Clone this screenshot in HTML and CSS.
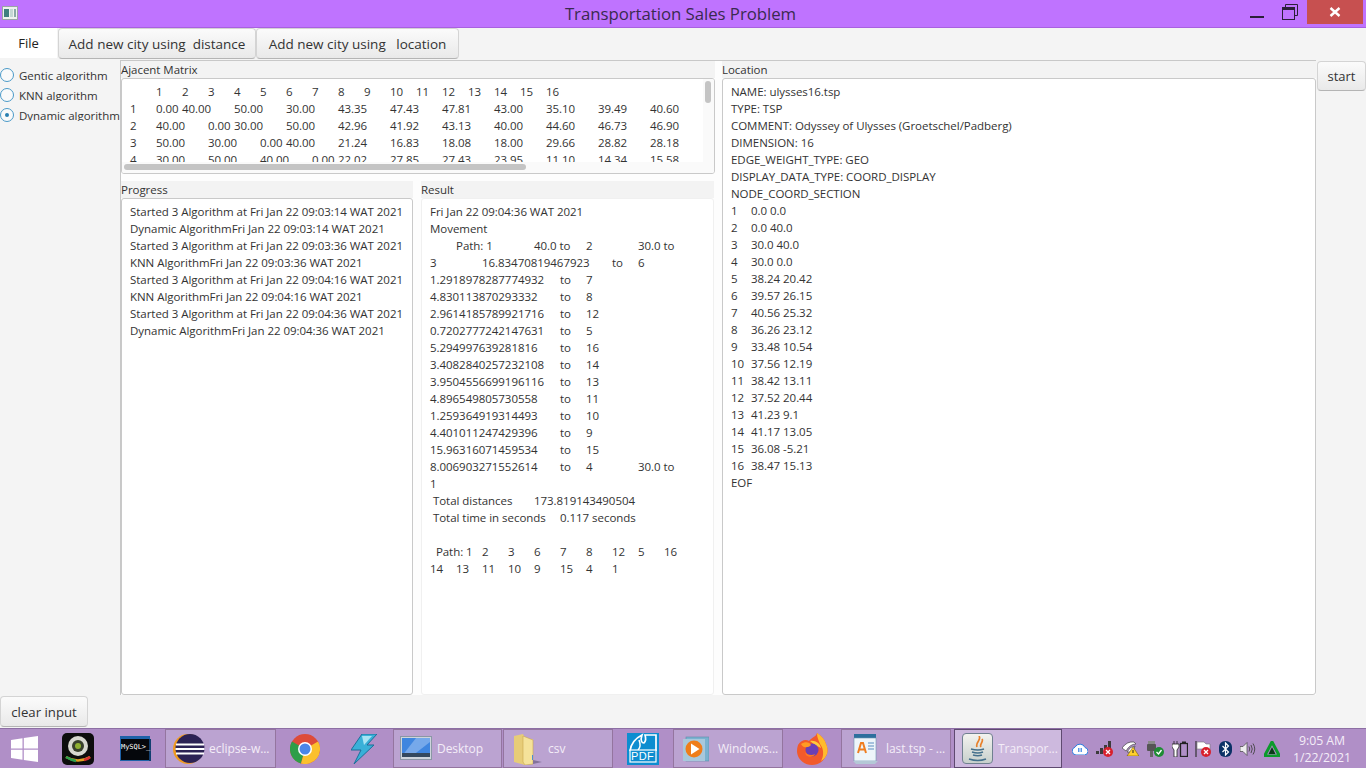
FILE: index.html
```html
<!DOCTYPE html>
<html lang="en">
<head>
<meta charset="UTF-8">
<title>Transportation Sales Problem</title>
<link rel="stylesheet" href="styles.css">
</head>
<body>

<header class="titlebar">
  <svg class="app-icon" width="16" height="14" viewBox="0 0 16 14"><rect x="0.5" y="0.5" width="15" height="13" fill="#eef2f0" stroke="#9aa6a6"/><rect x="2" y="3" width="5" height="8" fill="#3f7f80"/><rect x="8" y="3" width="3" height="8" fill="#c4d8d4"/><rect x="12" y="3" width="2" height="8" fill="#8aa8a8"/></svg>
  <h1 class="title">Transportation Sales Problem</h1>
  <div class="win-controls">
    <svg class="ctl-min" width="14" height="2" viewBox="0 0 14 2"><rect width="14" height="2" fill="#2b1f3a"/></svg>
    <svg class="ctl-max" width="16" height="16" viewBox="0 0 16 16"><path d="M3.5 3.5V.5h12v11h-3" fill="none" stroke="#2b1f3a"/><rect x="0.5" y="3.5" width="12" height="12" fill="none" stroke="#2b1f3a"/><rect x="0" y="3" width="13" height="3" fill="#2b1f3a"/></svg>
    <div class="ctl-close"><svg width="12" height="10" viewBox="0 0 12 10"><path d="M1.5 1l9 8M10.5 1l-9 8" stroke="#fff" stroke-width="2.4" fill="none"/></svg></div>
  </div>
</header>

<div class="app">
  <nav class="toolbar">
    <div class="menu">File</div>
    <button class="btn tool-a">Add new city using&nbsp; distance</button>
    <button class="btn tool-b">Add new city using&nbsp;&nbsp; location</button>
  </nav>

  <main class="content">
    <aside class="algos">
      <label class="radio"><span class="dot"></span><span class="radio-text">Gentic algorithm</span></label>
      <label class="radio"><span class="dot"></span><span class="radio-text">KNN algorithm</span></label>
      <label class="radio"><span class="dot on"></span><span class="radio-text">Dynamic algorithm</span></label>
    </aside>

    <div class="panels">
      <div class="left-col">
        <section class="pane">
          <div class="pane-title">Ajacent Matrix</div>
          <div class="box matrix">
<div class="text">	1	2	3	4	5	6	7	8	9	10	11	12	13	14	15	16
1	0.00	40.00	50.00	30.00	43.35	47.43	47.81	43.00	35.10	39.49	40.60
2	40.00	0.00	30.00	50.00	42.96	41.92	43.13	40.00	44.60	46.73	46.90
3	50.00	30.00	0.00	40.00	21.24	16.83	18.08	18.00	29.66	28.82	28.18
4	30.00	50.00	40.00	0.00	22.02	27.85	27.43	23.95	11.10	14.34	15.58</div>
            <div class="vbar"><div class="vthumb"></div></div>
            <div class="hbar"><div class="hthumb"></div></div>
          </div>
        </section>

        <div class="lower">
          <section class="pane">
            <div class="pane-title">Progress</div>
            <div class="box tall">
<div class="text">Started 3 Algorithm at Fri Jan 22 09:03:14 WAT 2021
Dynamic AlgorithmFri Jan 22 09:03:14 WAT 2021
Started 3 Algorithm at Fri Jan 22 09:03:36 WAT 2021
KNN AlgorithmFri Jan 22 09:03:36 WAT 2021
Started 3 Algorithm at Fri Jan 22 09:04:16 WAT 2021
KNN AlgorithmFri Jan 22 09:04:16 WAT 2021
Started 3 Algorithm at Fri Jan 22 09:04:36 WAT 2021
Dynamic AlgorithmFri Jan 22 09:04:36 WAT 2021</div>
            </div>
          </section>
          <section class="pane">
            <div class="pane-title">Result</div>
            <div class="box tall faint">
<div class="text">Fri Jan 22 09:04:36 WAT 2021
Movement
	Path: 1		40.0 to	2		30.0 to
3		16.83470819467923	to	6
1.2918978287774932	to	7
4.830113870293332	to	8
2.9614185789921716	to	12
0.7202777242147631	to	5
5.294997639281816	to	16
3.4082840257232108	to	14
3.9504556699196116	to	13
4.896549805730558	to	11
1.259364919314493	to	10
4.401011247429396	to	9
15.96316071459534	to	15
8.006903271552614	to	4		30.0 to
1
 Total distances	173.819143490504
 Total time in seconds	0.117 seconds

  Path: 1	2	3	6	7	8	12	5	16
14	13	11	10	9	15	4	1</div>
            </div>
          </section>
        </div>
      </div>

      <section class="pane location">
        <div class="pane-title">Location</div>
        <div class="box tall">
<div class="text loc-text">NAME: ulysses16.tsp
TYPE: TSP
COMMENT: Odyssey of Ulysses (Groetschel/Padberg)
DIMENSION: 16
EDGE_WEIGHT_TYPE: GEO
DISPLAY_DATA_TYPE: COORD_DISPLAY
NODE_COORD_SECTION
1	0.0 0.0
2	0.0 40.0
3	30.0 40.0
4	30.0 0.0
5	38.24 20.42
6	39.57 26.15
7	40.56 25.32
8	36.26 23.12
9	33.48 10.54
10	37.56 12.19
11	38.42 13.11
12	37.52 20.44
13	41.23 9.1
14	41.17 13.05
15	36.08 -5.21
16	38.47 15.13
EOF</div>
        </div>
      </section>
    </div>

    <div class="start-col"><button class="btn start">start</button></div>
  </main>

  <footer class="footer"><button class="btn clear">clear input</button></footer>
</div>

<div class="taskbar">
  <div class="slot s-win">
    <svg width="28" height="26" viewBox="0 0 28 26"><path d="M0 4l11.500-1.700v10.200H0zM12.800 2.100L27 0v12.500H12.800zM0 13.800h11.500v10L0 22zM12.800 13.800H27V26l-14.200-2z" fill="#fff"/></svg>
  </div>
  <div class="slot s-cam">
    <svg width="32" height="32" viewBox="0 0 32 32"><rect width="32" height="32" rx="5" fill="#0d0d0d"/><ellipse cx="16" cy="13" rx="10" ry="10" fill="#d8d8d0"/><circle cx="16" cy="13" r="6" fill="#39402c"/><circle cx="16" cy="13" r="3" fill="#8fb030"/><path d="M4 24q12 7 24 0" fill="none" stroke="#e0a020" stroke-width="2.500"/><path d="M4 24q5 3 10 4" fill="none" stroke="#2aa050" stroke-width="2.500"/><path d="M22 27q4-1 6-3" fill="none" stroke="#d83030" stroke-width="2.500"/></svg>
  </div>
  <div class="slot s-sql">
    <svg width="31" height="25" viewBox="0 0 31 25"><rect width="30" height="25" fill="#1e62a8"/><rect x="1" y="3" width="28" height="21" fill="#05070c"/><rect x="29" y="3" width="2" height="22" fill="#123f70"/></svg>
    <span class="sql-text">MySQL&gt;_</span>
  </div>
  <div class="task t-eclipse">
    <svg width="32" height="32" viewBox="0 0 32 32"><circle cx="15" cy="16" r="15" fill="#f09a20"/><circle cx="17" cy="15.500" r="14.500" fill="#2c2255"/><path d="M3 11.500h28M2.500 16h29M3 20.500h28" stroke="#fff" stroke-width="2"/></svg>
    <span>eclipse-w...</span>
  </div>
  <div class="slot s-chrome">
    <svg width="30" height="30" viewBox="0 0 30 30"><circle cx="15" cy="15" r="15" fill="#dd4b39"/><path d="M15 15L2 7.500A15 15 0 0 0 11 29.500z" fill="#2e9e48"/><path d="M15 15l-4 14.500A15 15 0 0 0 28 7.500z" fill="#fbc02d"/><circle cx="15" cy="15" r="7" fill="#fff"/><circle cx="15" cy="15" r="5.500" fill="#4a86e8"/></svg>
  </div>
  <div class="slot s-bolt">
    <svg width="26" height="30" viewBox="0 0 26 30"><path d="M11 0h15L16 11h7L3 30l7-14H0z" fill="#39b0d8" stroke="#1d6f98" stroke-width="1"/><path d="M11 2h10l-8 9" fill="#a8e4f4"/></svg>
  </div>
  <div class="task t-desktop">
    <svg width="32" height="26" viewBox="0 0 32 26"><rect x="0.500" y="0.500" width="31" height="23" fill="#cdd5dc" stroke="#8b97a5"/><rect x="2" y="2" width="28" height="18" fill="#3f86df"/><path d="M2 20L16 2h14v4L12 20z" fill="#76a9ea"/><rect x="2" y="17" width="28" height="4" fill="#34495e"/></svg>
    <span>Desktop</span>
  </div>
  <div class="task t-csv">
    <svg width="30" height="32" viewBox="0 0 30 32"><path d="M1 3l9-2 3 6 7-1v23l-8 3-11-3z" fill="#e7cc78"/><path d="M10 3l10 4v24l-8 1-2-3z" fill="#f5e29a" stroke="#c9a94f" stroke-width=".6"/><path d="M20 27l9 2-9 2z" fill="#84739a"/><rect x="19" y="22" width="1" height="5" fill="#4f8fd0"/></svg>
    <span>csv</span>
  </div>
  <div class="slot s-pdf">
    <svg width="32" height="32" viewBox="0 0 32 32"><rect width="32" height="32" fill="#0d8dd0"/><path d="M3 18C4 10 9 5 15 2 13 8 15 10 17 10 19 8 19 5 18 2h11v16" fill="none" stroke="#fff" stroke-width="1.700"/><path d="M12 7C14 12 13 15 11 17" fill="none" stroke="#fff" stroke-width="1.500"/><rect x="3" y="17" width="26" height="12" fill="#0d8dd0" stroke="#fff" stroke-width="1.200"/></svg>
    <span class="pdf-text">PDF</span>
  </div>
  <div class="task t-media">
    <svg width="26" height="26" viewBox="0 0 26 26"><rect x="3" y="1" width="23" height="24" fill="#7ab2d0" stroke="#5d8ca8" stroke-width=".6"/><rect x="0" y="3" width="22" height="22" fill="#a8c8dc"/><circle cx="11" cy="13" r="8.500" fill="#ef7d1a"/><path d="M8 7.500v11l8.500-5.500z" fill="#fff"/></svg>
    <span>Windows...</span>
  </div>
  <div class="slot s-fox">
    <svg width="31" height="32" viewBox="0 0 31 32"><path d="M1 12C4 7 9 6 12 8 15 4 19 4 20 0c5 3 8 7 9 11 2 4 2 9 0 12-3 6-8 9-14 9C6 32 0 25 0 18c0-2 .3-4 1-6z" fill="#f25a2b"/><path d="M20 0c5 3 8 7 9 11 2 4 2 9 0 12-1 2-3 4-5 5 3-5 3-12-1-17-1-3-3-6-3-11z" fill="#ffbb2c"/><path d="M13 8c5-1 10 2 11 7l-6-3z" fill="#ffc93a"/><circle cx="15" cy="17" r="6.500" fill="#6b3fb5"/><path d="M4 11c4-3 9-2 10 1-2 2-3 2-4 2-3 1-5-1-6-3z" fill="#ff9b24"/><path d="M8 19c2 3 7 4 10 2-1 3-6 4-9 1z" fill="#ff7a1e"/></svg>
  </div>
  <div class="task t-last">
    <svg width="25" height="30" viewBox="0 0 25 30"><rect x="1" y="0" width="22" height="5" fill="#2d6f9d"/><rect x="1" y="4" width="22" height="23" fill="#eef5fa" stroke="#6d94b1" stroke-width=".6"/><path d="M0 27h25l-3 3H3z" fill="#b4c8d6"/><path d="M5 19l3-10h2l3 10M6 15.500h6" fill="none" stroke="#ee7d20" stroke-width="2"/><path d="M15 9h6M15 12h6M15 15h6" stroke="#5a8dc0"/></svg>
    <span>last.tsp - ...</span>
  </div>
  <div class="task t-active">
    <div class="java-tile"><svg width="20" height="26" viewBox="0 0 20 26"><path d="M11 0c3 4-4 6-2 11M14 3c2 3-3 5-1 8" fill="none" stroke="#e8802a" stroke-width="1.700"/><path d="M3 13q7 2 13 0M4 16q6 2 11 0M5 19q5 1.500 9 0" fill="none" stroke="#44708c" stroke-width="1.400"/><path d="M1 23q9 3 17 0" fill="none" stroke="#44708c" stroke-width="1.500"/></svg></div>
    <span>Transpor...</span>
  </div>

  <div class="tray">
    <svg width="16" height="12" viewBox="0 0 16 12"><path d="M4 12a4 4 0 0 1-1-7.800A5.500 5.500 0 0 1 13 4.500 3.800 3.800 0 0 1 12.500 12z" fill="#fff" stroke="#2f7de1"/><path d="M6.800 5v4M9.200 5v4" stroke="#2f7de1" stroke-width="1.200"/></svg>
    <svg width="18" height="16" viewBox="0 0 18 16"><path d="M0 10h3v3H0zM4 7h3v6H4zM8 4h3v9H8zM12 0h3v13h-3z" fill="#3c3c3c"/><circle cx="12" cy="11" r="5" fill="#d8202c"/><path d="M10 9l4 4M14 9l-4 4" stroke="#fff" stroke-width="1.300"/></svg>
    <svg width="17" height="15" viewBox="0 0 17 15"><path d="M0 7q5-7 12-6l2 2Q8 3 4 10z" fill="#fff" stroke="#444" stroke-width=".7"/><path d="M5 11q3-6 8-6l-2 6z" fill="#fff" stroke="#444" stroke-width=".7"/><path d="M11 6l6 9H5z" fill="#ffcf2e" stroke="#5a4a00" stroke-width=".5"/><rect x="10.500" y="9" width="1" height="3" fill="#222"/></svg>
    <svg width="17" height="16" viewBox="0 0 17 16"><rect x="1" y="0" width="7" height="3" fill="#8a8a8a"/><rect x="0" y="3" width="9" height="7" rx="1" fill="#555"/><rect x="3" y="10" width="3" height="6" fill="#666"/><circle cx="12" cy="11" r="5" fill="#1e8c34"/><path d="M9.500 11l2 2 3-4" fill="none" stroke="#fff" stroke-width="1.300"/></svg>
    <svg width="16" height="16" viewBox="0 0 16 16"><path d="M2 0v3M5 0v3M0 3h7v3l-2 3v7H2V9L0 6z" fill="#fff" stroke="#222" stroke-width=".8"/><rect x="8.500" y="2.500" width="7" height="13" fill="none" stroke="#222" stroke-width="1.300"/><rect x="10" y="0.500" width="4" height="2" fill="#222"/></svg>
    <svg width="16" height="16" viewBox="0 0 16 16"><path d="M1 0v16" stroke="#333" stroke-width="1.200"/><path d="M2 1h7l2 2h4v7H9L7 8H2z" fill="#fff" stroke="#777" stroke-width=".6"/><circle cx="11" cy="11" r="5" fill="#d8202c"/><path d="M9 9l4 4M13 9l-4 4" stroke="#fff" stroke-width="1.300"/></svg>
    <svg width="13" height="16" viewBox="0 0 13 16"><rect width="13" height="16" rx="6" fill="#0b3166"/><path d="M3.500 5l6 6-3 3V2l3 3-6 6" fill="none" stroke="#fff" stroke-width="1.200"/></svg>
    <svg width="16" height="14" viewBox="0 0 16 14"><path d="M0 4.500h3L7 .5v13l-4-4H0z" fill="#eee" stroke="#444" stroke-width=".7"/><path d="M9 4.500q1.500 2.500 0 5M11 3q2.500 4 0 8M13 1.500q3.500 5.500 0 11" fill="none" stroke="#444" stroke-width=".9"/></svg>
    <svg width="16" height="16" viewBox="0 0 16 16"><path d="M8 1l7.500 14H.5z" fill="none" stroke="#0c9a2c" stroke-width="3"/><path d="M8 6l3.500 7h-7z" fill="#0a3a18"/></svg>
  </div>
  <div class="clock"><div>9:05 AM</div><div>1/22/2021</div></div>
</div>

</body>
</html>
```

FILE: styles.css
```css
* {
  box-sizing: border-box;
}
html, body {
  margin: 0;
  height: 100%;
}
body {
  width: 1366px;
  height: 768px;
  overflow: hidden;
  display: flex;
  flex-direction: column;
  font-family: "Open Sans", "Noto Sans", sans-serif;
  font-size: 11.5px;
  letter-spacing: -0.04px;
  color: #333;
  background-color: #f4f4f4;
}

/* window title */
.titlebar {
  height: 28px;
  flex: none;
  display: flex;
  align-items: center;
  position: relative;
  background-color: #bf73ff;
  border-bottom: 1px solid #a860e0;
}
.app-icon {
  position: absolute;
  left: 2px;
  top: 6px;
}
.title {
  flex: 1;
  margin: 0;
  padding-right: 5px;
  text-align: center;
  font-size: 16.8px;
  font-weight: normal;
  color: #3a2a50;
}
.win-controls {
  position: absolute;
  top: 0;
  right: 3px;
  height: 24px;
  display: flex;
}
.ctl-min {
  margin: 16px 18px 0 0;
}
.ctl-max {
  margin: 4px 9px 0 0;
}
.ctl-close {
  width: 56px;
  height: 24px;
  background-color: #c75050;
  display: flex;
  align-items: center;
  justify-content: center;
}

.app {
  flex: 1;
  display: flex;
  flex-direction: column;
  min-height: 0;
}

/* top row */
.toolbar {
  height: 32px;
  flex: none;
  display: flex;
  align-items: flex-start;
}
.menu {
  width: 57px;
  height: 30px;
  background-color: #fff;
  text-align: center;
  font-size: 13px;
  line-height: 30px;
  color: #222;
}
.btn {
  font-family: inherit;
  color: #333;
  border: 1px solid #d4d4d4;
  border-bottom-color: #b4b4b4;
  border-radius: 4px;
  background: linear-gradient(#fbfbfb, #e9e9e9);
  padding: 0;
  font-size: 13px;
}
.tool-a {
  width: 198px;
  height: 31px;
  margin-left: 1px;
  font-size: 13.5px;
}
.tool-b {
  width: 203px;
  height: 31px;
  font-size: 13.5px;
}

.content {
  flex: 1;
  min-height: 0;
  display: grid;
  grid-template-columns: 120px 1196px 50px;
}

/* radio list */
.algos {
  padding-top: 7px;
  display: flex;
  flex-direction: column;
  gap: 4px;
}
.radio {
  height: 16px;
  display: flex;
  align-items: center;
  overflow: hidden;
}
.dot {
  width: 14px;
  height: 14px;
  flex: none;
  border: 1.500px solid #4a9ac8;
  border-radius: 50%;
  background-color: #fafafa;
  display: flex;
  align-items: center;
  justify-content: center;
}
.dot.on::after {
  content: "";
  width: 4px;
  height: 4px;
  border-radius: 50%;
  background-color: #2a7fb0;
}
/* descenders are cut off in the original app */
.radio-text {
  align-self: flex-start;
  height: 13px;
  margin: 1px 0 0 5px;
  overflow: hidden;
  white-space: nowrap;
  line-height: 16px;
}

/* panes */
.panels {
  display: grid;
  grid-template-columns: 594px 594px;
  column-gap: 7px;
  border-left: 1px solid #c8c8c8;
  border-top: 1px solid #c8c8c8;
  margin-bottom: 1px;
  background-color: #fdfdfd;
}
.left-col {
  display: flex;
  flex-direction: column;
  min-height: 0;
}
.pane {
  display: flex;
  flex-direction: column;
  min-height: 0;
}
.pane-title {
  height: 17px;
  line-height: 18px;
  color: #333;
  background-color: #f3f3f3;
}
.lower {
  flex: 1;
  min-height: 0;
  display: grid;
  grid-template-columns: 292px 293px;
  column-gap: 8px;
  margin-top: 7px;
}
.box {
  position: relative;
  background-color: #fff;
  border: 1px solid #c9c9c9;
  border-radius: 3px;
  overflow: hidden;
}
.faint {
  border-color: #f0f0f0;
}
.tall {
  flex: 1;
  min-height: 0;
}
.matrix {
  height: 96px;
}
.text {
  padding: 4px 0 0 8px;
  white-space: pre;
  line-height: 17px;
  tab-size: 26px;
}
.loc-text {
  tab-size: 20px;
}

/* fake scroll bars in the matrix box */
.vbar {
  position: absolute;
  right: 0;
  top: 0;
  bottom: 0;
  width: 11px;
  background-color: #fafafa;
}
.vthumb {
  width: 6px;
  height: 22px;
  margin: 2px 0 0 2px;
  border-radius: 3px;
  background-color: #c4c4c4;
}
.hbar {
  position: absolute;
  left: 0;
  right: 11px;
  bottom: 0;
  height: 11px;
  background-color: #fafafa;
}
.hthumb {
  width: 402px;
  height: 6px;
  margin: 2px 0 0 2px;
  border-radius: 3px;
  background-color: #c4c4c4;
}

.start-col {
  padding-left: 1px;
}
.start {
  width: 49px;
  height: 30px;
  margin-top: 1px;
}

.footer {
  height: 32px;
  flex: none;
}
.clear {
  width: 88px;
  height: 31px;
  font-size: 13.200px;
}

/* taskbar */
.taskbar {
  height: 40px;
  flex: none;
  display: flex;
  align-items: center;
  position: relative;
  background-color: #b08fc7;
  border-top: 1px solid #8d6fa4;
  color: #f4edf8;
  font-size: 12px;
}
.slot {
  position: relative;
  height: 39px;
  display: flex;
  align-items: center;
  justify-content: center;
  flex: none;
}
.s-win { width: 50px; }
.s-cam { width: 56px; }
.s-sql { width: 59px; }
.s-chrome { width: 58px; }
.s-bolt { width: 59px; }
.s-pdf { width: 60px; }
.s-fox { width: 58px; }
.sql-text {
  position: absolute;
  left: 15px;
  top: 14px;
  font-family: "DejaVu Sans Mono", monospace;
  font-size: 7px;
  color: #fff;
}
.pdf-text {
  position: absolute;
  left: 18px;
  top: 21px;
  font-family: "Liberation Sans", sans-serif;
  font-size: 11px;
  letter-spacing: 0.3px;
  color: #fff;
  line-height: 13px;
}
.task {
  height: 39px;
  flex: none;
  display: flex;
  align-items: center;
  gap: 4px;
  padding-left: 7px;
  background-color: #bba3d1;
  outline: 1px solid #94759f;
  outline-offset: -1px;
  border: 1px solid #d7c9e2;
  white-space: nowrap;
  overflow: hidden;
}
.t-eclipse { width: 111px; }
.t-desktop { width: 109px; margin-right: 1px; padding-left: 6px; gap: 5px; }
.t-csv { width: 110px; padding-left: 9px; gap: 5px; }
.t-media { width: 110px; padding-left: 9px; gap: 9px; }
.t-last { width: 110px; padding-left: 11px; gap: 8px; margin-right: 3px; }
.t-active {
  width: 108px;
  padding-left: 7px;
  gap: 5px;
  background-color: #cdb9de;
  border-color: #f1ebf5;
  outline-color: #5f4a70;
}
.java-tile {
  width: 31px;
  height: 31px;
  display: flex;
  align-items: center;
  justify-content: center;
  border-radius: 4px;
  background: linear-gradient(#f3f3ef, #c8d0cc);
  border: 1px solid #708090;
}
.tray {
  margin-left: 10px;
  width: 208px;
  display: flex;
  align-items: center;
  justify-content: space-between;
}
.clock {
  margin-left: 9px;
  width: 66px;
  text-align: center;
  line-height: 17px;
  font-size: 12.300px;
}
```
